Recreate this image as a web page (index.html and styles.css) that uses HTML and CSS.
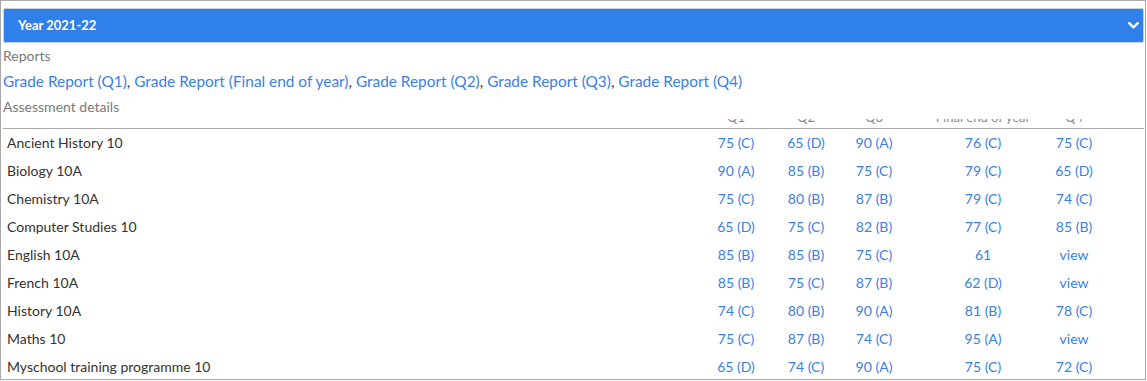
FILE: index.html
```html
<!DOCTYPE html>
<html>
<head>
<meta charset="utf-8">
<link rel="stylesheet" href="styles.css">
</head>
<body>
<div class="frame">
  <div class="year-select">
    <span class="year-label">Year 2021-22</span>
    <svg class="chev" width="11" height="7" viewBox="0 0 11 7"><path d="M1.2 1.2 L5.5 5.3 L9.8 1.2" fill="none" stroke="#fff" stroke-width="2.4" stroke-linecap="round" stroke-linejoin="round"/></svg>
  </div>
  <div class="label">Reports</div>
  <div class="links"><a>Grade Report (Q1)</a>, <a>Grade Report (Final end of year)</a>, <a>Grade Report (Q2)</a>, <a>Grade Report (Q3)</a>, <a>Grade Report (Q4)</a></div>
  <div class="label">Assessment details</div>
  <div class="thead-clip">
    <div class="row head">
      <div class="subj"></div>
      <div class="c">Q1</div><div class="c">Q2</div><div class="c">Q3</div><div class="c">Final end of year</div><div class="c">Q4</div><div></div>
    </div>
  </div>
  <div class="tbody">
    <div class="row"><div class="subj">Ancient History 10</div><div class="c v">75 (C)</div><div class="c v">65 (D)</div><div class="c v">90 (A)</div><div class="c v">76 (C)</div><div class="c v">75 (C)</div><div></div></div>
    <div class="row"><div class="subj">Biology 10A</div><div class="c v">90 (A)</div><div class="c v">85 (B)</div><div class="c v">75 (C)</div><div class="c v">79 (C)</div><div class="c v">65 (D)</div><div></div></div>
    <div class="row"><div class="subj">Chemistry 10A</div><div class="c v">75 (C)</div><div class="c v">80 (B)</div><div class="c v">87 (B)</div><div class="c v">79 (C)</div><div class="c v">74 (C)</div><div></div></div>
    <div class="row"><div class="subj">Computer Studies 10</div><div class="c v">65 (D)</div><div class="c v">75 (C)</div><div class="c v">82 (B)</div><div class="c v">77 (C)</div><div class="c v">85 (B)</div><div></div></div>
    <div class="row"><div class="subj">English 10A</div><div class="c v">85 (B)</div><div class="c v">85 (B)</div><div class="c v">75 (C)</div><div class="c v">61</div><div class="c v">view</div><div></div></div>
    <div class="row"><div class="subj">French 10A</div><div class="c v">85 (B)</div><div class="c v">75 (C)</div><div class="c v">87 (B)</div><div class="c v">62 (D)</div><div class="c v">view</div><div></div></div>
    <div class="row"><div class="subj">History 10A</div><div class="c v">74 (C)</div><div class="c v">80 (B)</div><div class="c v">90 (A)</div><div class="c v">81 (B)</div><div class="c v">78 (C)</div><div></div></div>
    <div class="row"><div class="subj">Maths 10</div><div class="c v">75 (C)</div><div class="c v">87 (B)</div><div class="c v">74 (C)</div><div class="c v">95 (A)</div><div class="c v">view</div><div></div></div>
    <div class="row"><div class="subj">Myschool training programme 10</div><div class="c v">65 (D)</div><div class="c v">74 (C)</div><div class="c v">90 (A)</div><div class="c v">75 (C)</div><div class="c v">72 (C)</div><div></div></div>
  </div>
</div>
</body>
</html>
```

FILE: styles.css
```css
* { box-sizing: border-box; }
html, body { margin: 0; padding: 0; background: #fff; }
body { font-family: Lato, "Noto Sans", sans-serif; color: #333; }

.frame {
  width: 1146px;
  height: 380px;
  border: 1px solid #a9a9a9;
  padding: 7px 1px 0 2px;
  overflow: hidden;
}

.year-select {
  height: 35px;
  background: #2f80eb;
  border: 1px solid #c9d2dc;
  border-radius: 2px;
  display: flex;
  align-items: center;
  justify-content: space-between;
  padding: 0 4px 1px 14px;
}
.year-label { color: #fff; font-weight: 700; font-size: 13px; }
.chev { display: block; margin-top: 1px; }

.label { font-size: 14px; line-height: 25px; color: #7a7a7a; }
.links { font-size: 15.4px; line-height: 26px; color: #333; }
.links a { color: #3a7fe6; }

.row {
  display: grid;
  grid-template-columns: 1fr 70px 70px 66px 152px 30px 55px;
  height: 28px;
  padding-bottom: 2px;
  align-items: center;
  font-size: 14px;
}
.subj { padding-left: 4px; white-space: nowrap; }
.c { display: flex; justify-content: center; white-space: nowrap; }
.v { color: #3a7fe6; }

.thead-clip {
  height: 10px;
  overflow: hidden;
  border-bottom: 1px solid #a9a9a9;
}
.row.head {
  height: 16px;
  padding-bottom: 0;
  margin-top: -10px;
  font-size: 13px;
  color: #8a8a8a;
}
```
